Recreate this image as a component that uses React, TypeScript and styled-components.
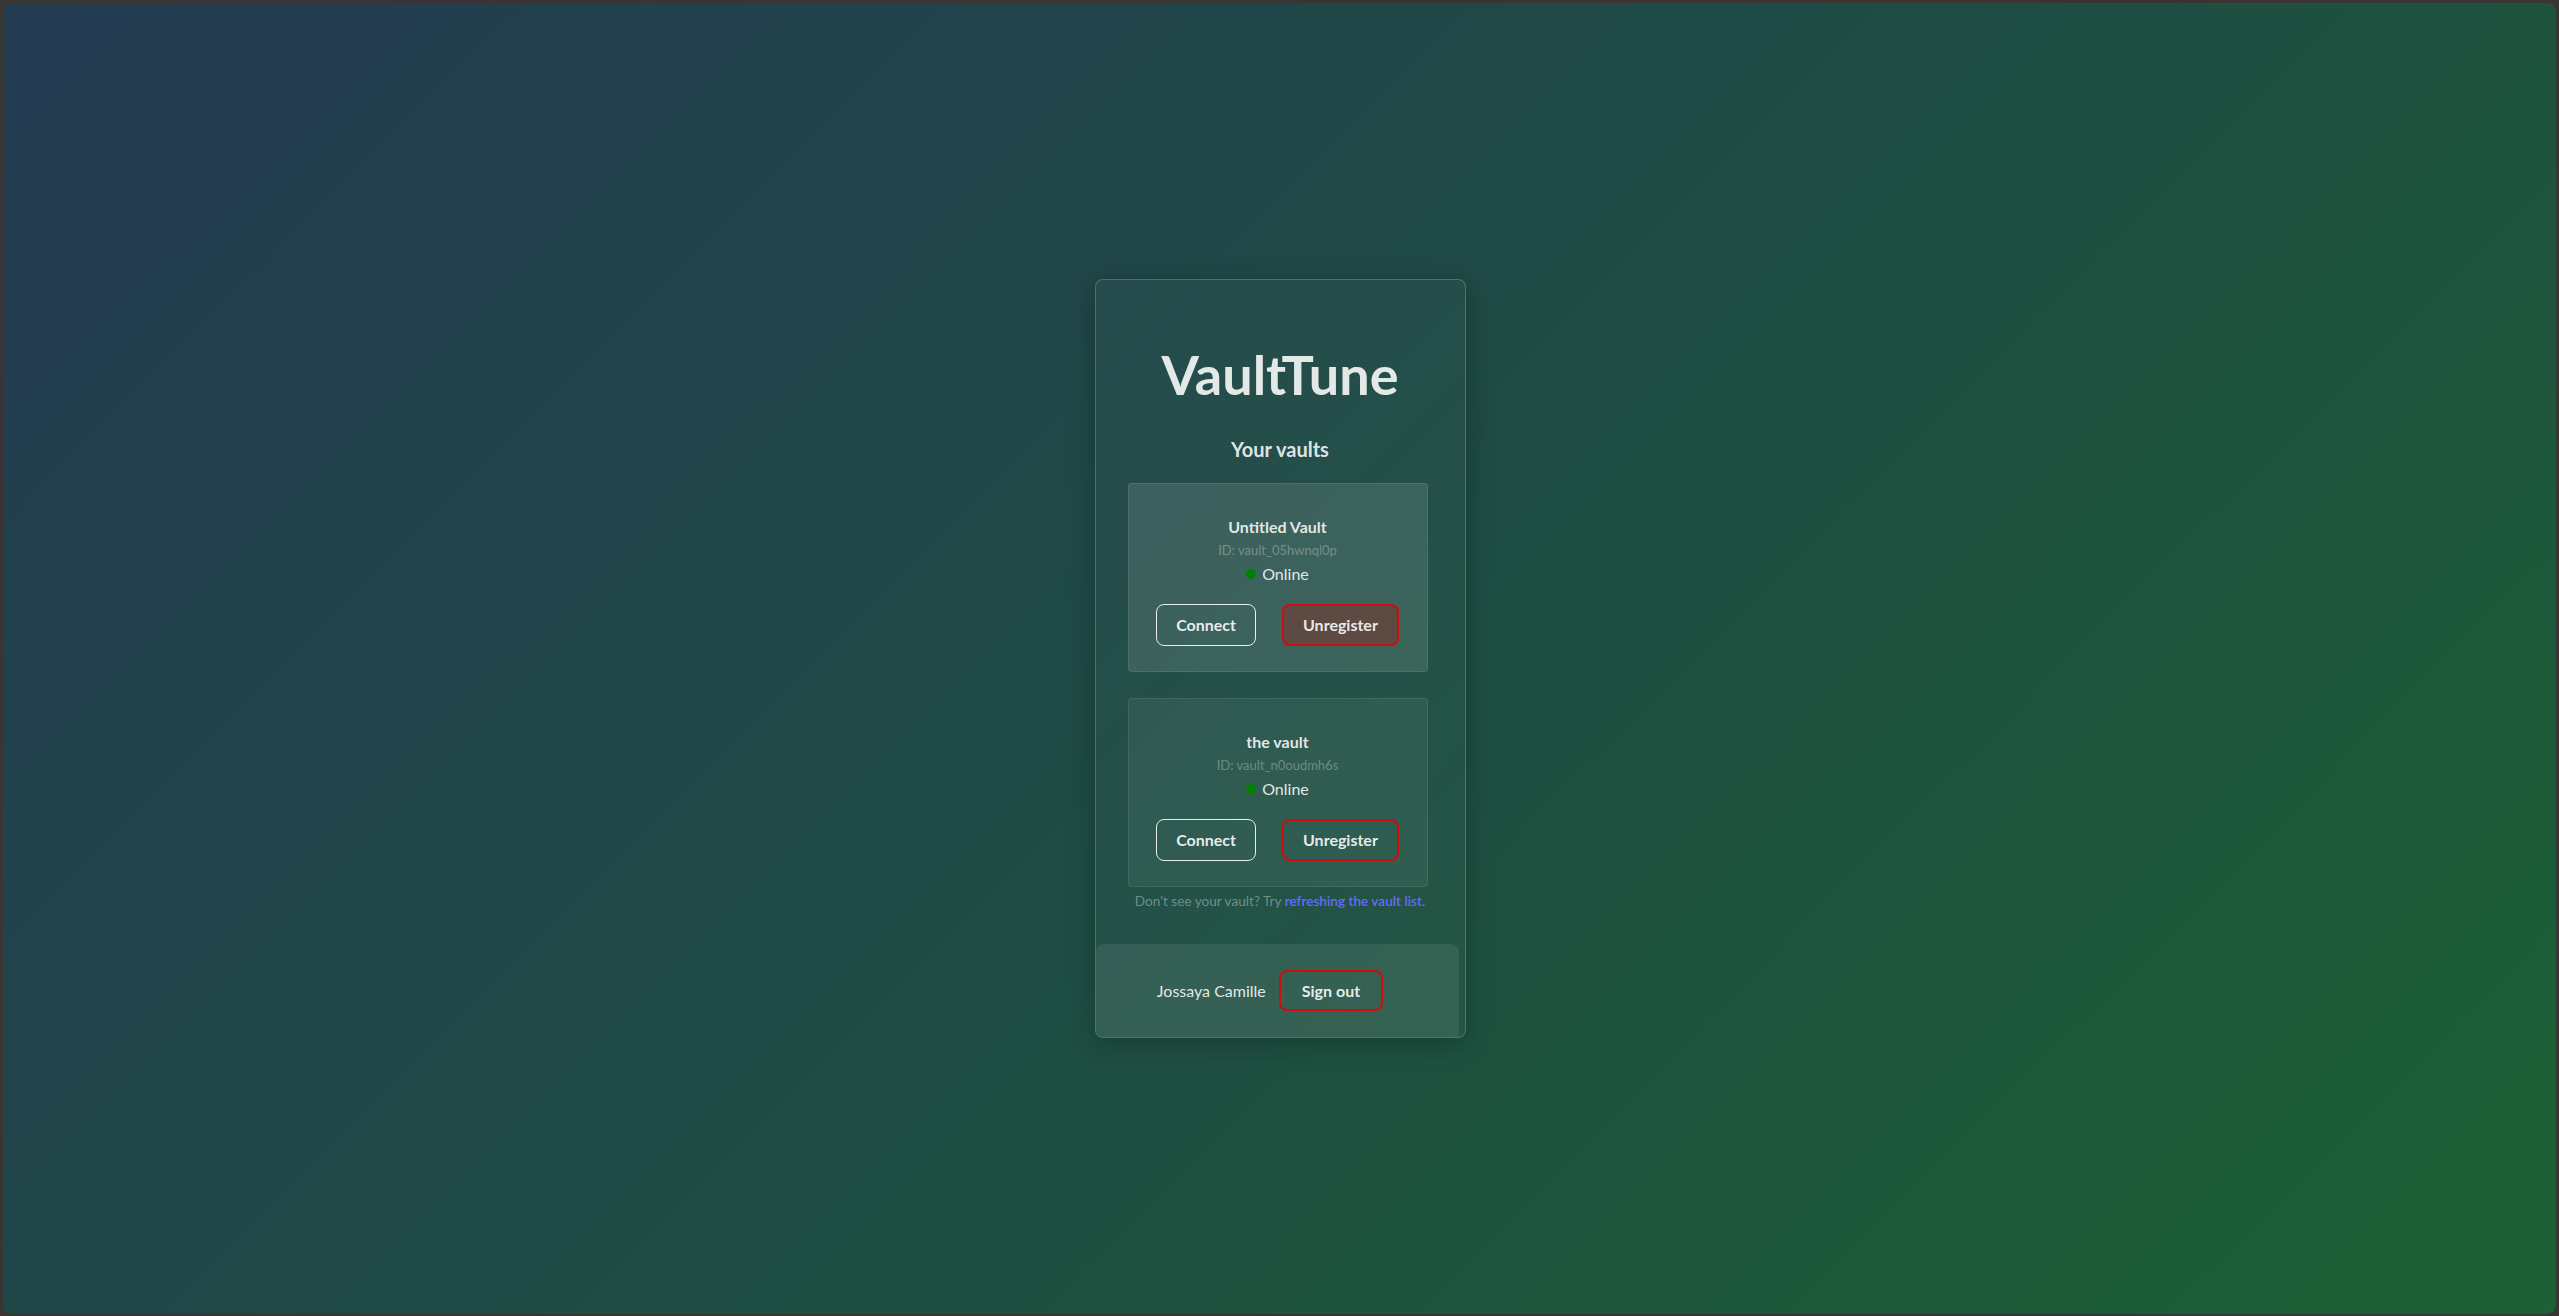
import styled, { createGlobalStyle } from 'styled-components';

const GlobalStyle = createGlobalStyle`
  html, body {
    margin: 0;
    padding: 0;
    height: 100%;
  }

  body {
    background: #3a3533;
    font-family: Lato, "Noto Sans", "Liberation Sans", sans-serif;
    color: rgba(255, 255, 255, 0.87);
    line-height: 1.5;
  }
`;

type Vault = {
  name: string;
  id: string;
  hovered?: boolean;
};

const vaults: Vault[] = [
  { name: 'Untitled Vault', id: 'vault_05hwnql0p', hovered: true },
  { name: 'the vault', id: 'vault_n0oudmh6s' },
];

export default function App() {
  return (
    <>
      <GlobalStyle />
      <Frame>
        <Screen>
          <Panel>
            <Title>VaultTune</Title>
            <Subtitle>Your vaults</Subtitle>

            <VaultList>
              {vaults.map(v => (
                <VaultCard key={v.id} $hovered={v.hovered}>
                  <VaultName>{v.name}</VaultName>
                  <VaultId>ID: {v.id}</VaultId>
                  <Status>
                    <Dot />
                    Online
                  </Status>
                  <Actions>
                    <Button>Connect</Button>
                    <Button $danger $active={v.hovered}>
                      Unregister
                    </Button>
                  </Actions>
                </VaultCard>
              ))}
            </VaultList>

            <Hint>
              Don't see your vault? Try <HintLink href="#">refreshing the vault list.</HintLink>
            </Hint>

            <Footer>
              <UserName>Jossaya Camille</UserName>
              <Button $danger $compact>
                Sign out
              </Button>
            </Footer>
          </Panel>
        </Screen>
      </Frame>
    </>
  );
}

const Frame = styled.div`
  height: 100vh;
  box-sizing: border-box;
  padding: 3px 3px 2px 3px;
`;

const Screen = styled.div`
  height: 100%;
  border-radius: 9px;
  background: linear-gradient(135deg, #243a51 0%, #1f4a46 45%, #1c6034 100%);
  display: flex;
  align-items: center;
  justify-content: center;
`;

const Panel = styled.section`
  width: 371px;
  box-sizing: border-box;
  margin-left: 1px;
  display: flex;
  flex-direction: column;
  align-items: center;
  text-align: center;
  background: rgba(255, 255, 255, 0.025);
  border: 1px solid rgba(255, 255, 255, 0.2);
  border-radius: 8px;
  box-shadow: 0 6px 28px rgba(0, 0, 0, 0.25);
  padding-top: 67px;
  overflow: hidden;
`;

const Title = styled.h1`
  margin: 0;
  font-size: 54px;
  line-height: 56px;
  font-weight: 700;
  color: #e3e9e7;
`;

const Subtitle = styled.h2`
  margin: 31px 0 19px;
  font-size: 20px;
  line-height: 30px;
  font-weight: 700;
`;

const VaultList = styled.div`
  display: flex;
  flex-direction: column;
  gap: 26px;
  margin-left: -5px;
`;

const VaultCard = styled.div<{ $hovered?: boolean }>`
  width: 300px;
  box-sizing: border-box;
  padding: 31px 0 25px;
  display: flex;
  flex-direction: column;
  align-items: center;
  border-radius: 4px;
  border: 1px solid rgba(255, 255, 255, 0.09);
  background: ${p => (p.$hovered ? 'rgba(255, 255, 255, 0.11)' : 'rgba(255, 255, 255, 0.06)')};
`;

const VaultName = styled.div`
  font-size: 16px;
  font-weight: 700;
  line-height: 24px;
`;

const VaultId = styled.div`
  font-size: 13px;
  line-height: 23px;
  color: rgba(255, 255, 255, 0.3);
`;

const Status = styled.div`
  display: flex;
  align-items: center;
  gap: 6px;
  font-size: 16px;
  line-height: 23px;
`;

const Dot = styled.span`
  width: 10px;
  height: 10px;
  border-radius: 50%;
  background: #008000;
`;

const Actions = styled.div`
  display: flex;
  gap: 26px;
  margin-top: 19px;
`;

const Button = styled.button<{ $danger?: boolean; $active?: boolean; $compact?: boolean }>`
  font-family: inherit;
  font-size: 16px;
  font-weight: 700;
  line-height: 24px;
  color: rgba(255, 255, 255, 0.9);
  height: ${p => (p.$compact ? '41px' : '42px')};
  padding: 0 ${p => (p.$compact ? '21px' : '19px')};
  border-radius: 8px;
  cursor: pointer;
  border: ${p => (p.$danger ? '2px solid #d10c0c' : '1.5px solid #e8eeec')};
  background: ${p => (p.$active ? '#5d4a42' : 'transparent')};
`;

const Hint = styled.p`
  margin: 4px 0 0;
  font-size: 13.6px;
  line-height: 20px;
  color: rgba(255, 255, 255, 0.36);
`;

const HintLink = styled.a`
  color: #646cff;
  font-weight: 600;
  text-decoration: none;
`;

const Footer = styled.footer`
  align-self: stretch;
  margin: 33px 6px 0 0;
  height: 93px;
  box-sizing: border-box;
  padding-right: 14px;
  display: flex;
  align-items: center;
  justify-content: center;
  gap: 13px;
  background: rgba(255, 255, 255, 0.08);
  border-radius: 8px 8px 0 8px;
`;

const UserName = styled.span`
  font-size: 16px;
  line-height: 24px;
`;
